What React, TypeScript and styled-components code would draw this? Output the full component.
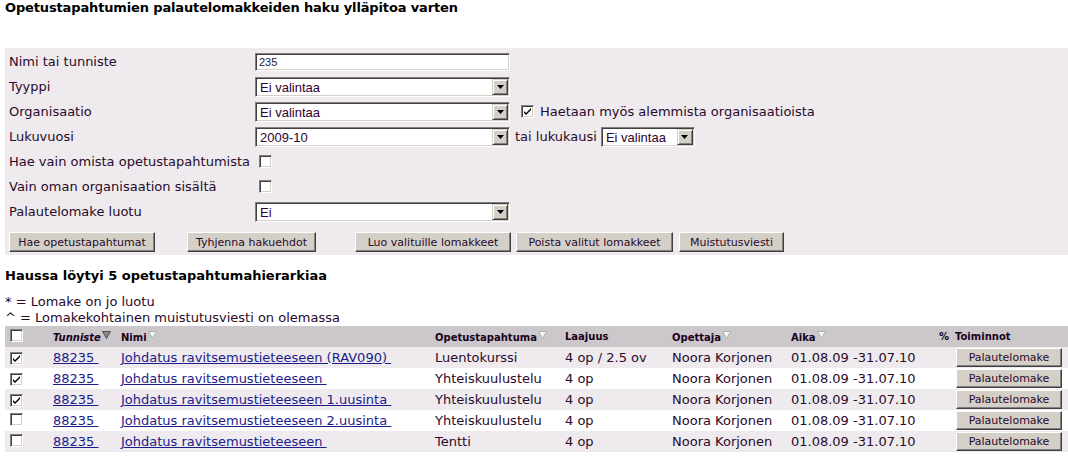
import * as React from "react"
import styled, { createGlobalStyle } from "styled-components"

const GlobalStyle = createGlobalStyle`
  body {
    margin: 0;
    background: #fff;
    font-family: "DejaVu Sans", Verdana, sans-serif;
    font-size: 13px;
    color: #2a0a2a;
  }
`

const Page = styled.div`
  padding-left: 5px;
`

const Title = styled.h1`
  margin: 0;
  font-size: 13px;
  font-weight: bold;
  line-height: 16px;
  letter-spacing: -0.14px;
  color: #000;
`

const Panel = styled.div`
  margin-top: 32px;
  background: #eeeaee;
  padding: 1px 0 3px 4px;
`

const FormRow = styled.div`
  display: flex;
  align-items: center;
  height: 25px;
`

const Label = styled.div`
  width: 246px;
  flex: none;
  line-height: 16px;
`

const TextInput = styled.div`
  box-sizing: border-box;
  width: 255px;
  height: 18px;
  background: #fff;
  border: 1px solid;
  border-color: #808080 #fff #fff #808080;
  box-shadow: inset 1px 1px 0 #404040, inset -1px -1px 0 #d4d0c8;
  font-family: "Liberation Sans", Arial, sans-serif;
  font-size: 11px;
  line-height: 16px;
  padding-left: 3px;
  color: #1a1a40;
`

const SelectBox = styled.div<{ $w: number; $ml?: number }>`
  box-sizing: border-box;
  width: ${(p) => p.$w}px;
  height: 20px;
  margin-left: ${(p) => p.$ml ?? 0}px;
  display: flex;
  background: #fff;
  border: 1px solid;
  border-color: #808080 #fff #fff #808080;
  box-shadow: inset 1px 1px 0 #404040, inset -1px -1px 0 #d4d0c8;
  padding: 2px;
`

const SelectValue = styled.span`
  flex: 1;
  padding-left: 2px;
  font-family: "Liberation Sans", Arial, sans-serif;
  font-size: 13px;
  line-height: 16px;
  color: #300030;
  white-space: nowrap;
  overflow: hidden;
`

const SelectArrow = styled.span`
  box-sizing: border-box;
  width: 16px;
  height: 16px;
  margin: -1px -1px 0 0;
  background: #d4d0c8;
  border: 1px solid;
  border-color: #d4d0c8 #404040 #404040 #d4d0c8;
  box-shadow: inset 1px 1px 0 #fff, inset -1px -1px 0 #808080;
  display: flex;
  align-items: center;
  justify-content: center;
`

const Check = styled.span<{ $ml?: number; $mr?: number }>`
  box-sizing: border-box;
  display: inline-flex;
  align-items: center;
  justify-content: center;
  flex: none;
  width: 13px;
  height: 13px;
  margin-left: ${(p) => p.$ml ?? 0}px;
  margin-right: ${(p) => p.$mr ?? 0}px;
  background: #fff;
  border: 1px solid;
  border-color: #808080 #fff #fff #808080;
  box-shadow: inset 1px 1px 0 #404040, inset -1px -1px 0 #d4d0c8;
`

const InlineText = styled.span<{ $ml?: number }>`
  margin-left: ${(p) => p.$ml ?? 0}px;
  line-height: 16px;
  white-space: nowrap;
`

const ButtonRow = styled.div`
  display: flex;
  margin-top: 8px;
  height: 20px;
`

const Button = styled.button<{ $w: number; $ml?: number }>`
  box-sizing: border-box;
  width: ${(p) => p.$w}px;
  height: 20px;
  margin: 0 0 0 ${(p) => p.$ml ?? 0}px;
  padding: 0;
  background: #d4d0c8;
  border: 1px solid;
  border-color: #fff #404040 #404040 #fff;
  box-shadow: inset -1px -1px 0 #808080;
  font-family: "DejaVu Sans", Verdana, sans-serif;
  font-size: 11px;
  color: #2a0a2a;
  white-space: nowrap;
`

const Heading = styled.h2`
  margin: 13px 0 0;
  font-size: 13px;
  font-weight: bold;
  line-height: 16px;
  color: #000;
`

const Legend = styled.div`
  margin-top: 10px;
  line-height: 16px;
`

const Table = styled.table`
  border-collapse: collapse;
  table-layout: fixed;
  width: 1063px;
`

const Th = styled.th<{ $italic?: boolean; $first?: boolean }>`
  height: 21px;
  padding: 0 0 0 ${(p) => (p.$first ? 5 : 3)}px;
  background: #cbc7cb;
  font-size: 10px;
  font-weight: bold;
  font-style: ${(p) => (p.$italic ? "italic" : "normal")};
  text-align: left;
  white-space: nowrap;
  overflow: hidden;
  color: #1a001a;
`

const Tr = styled.tr<{ $alt: boolean }>`
  background: ${(p) => (p.$alt ? "#fff" : "#eeeaee")};
`

const Td = styled.td<{ $first?: boolean }>`
  height: 21px;
  padding: 0 0 0 ${(p) => (p.$first ? 5 : 3)}px;
  white-space: nowrap;
  overflow: hidden;
  vertical-align: middle;
`

const CellLink = styled.a`
  color: #1c1c8a;
  text-decoration: underline;
  white-space: pre;
`

const RowButton = styled(Button)`
  height: 19px;
  vertical-align: middle;
`

const SortMark = styled.svg`
  margin-left: 1px;
  vertical-align: 2px;
`

function Arrow() {
  return (
    <svg width="7" height="4" viewBox="0 0 7 4">
      <path d="M0 0h7L3.5 4z" fill="#000" />
    </svg>
  )
}

function Select({ value, w, ml }: { value: string; w: number; ml?: number }) {
  return (
    <SelectBox $w={w} $ml={ml}>
      <SelectValue>{value}</SelectValue>
      <SelectArrow>
        <Arrow />
      </SelectArrow>
    </SelectBox>
  )
}

function Checkbox({ checked, ml, mr }: { checked?: boolean; ml?: number; mr?: number }) {
  return (
    <Check $ml={ml} $mr={mr}>
      {checked && (
        <svg width="7" height="7" viewBox="0 0 7 7">
          <path d="M0 3l2 2 5-5v2l-5 5-2-2z" fill="#000" />
        </svg>
      )}
    </Check>
  )
}

function Sort({ active }: { active?: boolean }) {
  return (
    <SortMark width="9" height="8" viewBox="0 0 9 8">
      <path
        d="M0.5 0.5h8L4.5 7.5z"
        fill={active ? "#8a8a8a" : "#f4f6f4"}
        stroke={active ? "#505050" : "#a8b4a8"}
        strokeWidth="1"
      />
    </SortMark>
  )
}

const rows = [
  { checked: true, name: "Johdatus ravitsemustieteeseen (RAV090) ", type: "Luentokurssi", scope: "4 op / 2.5 ov" },
  { checked: true, name: "Johdatus ravitsemustieteeseen ", type: "Yhteiskuulustelu", scope: "4 op" },
  { checked: true, name: "Johdatus ravitsemustieteeseen 1.uusinta ", type: "Yhteiskuulustelu", scope: "4 op" },
  { checked: false, name: "Johdatus ravitsemustieteeseen 2.uusinta ", type: "Yhteiskuulustelu", scope: "4 op" },
  { checked: false, name: "Johdatus ravitsemustieteeseen ", type: "Tentti", scope: "4 op" },
]

export default function App() {
  return (
    <Page>
      <GlobalStyle />
      <Title>Opetustapahtumien palautelomakkeiden haku ylläpitoa varten</Title>

      <Panel>
        <FormRow>
          <Label>Nimi tai tunniste</Label>
          <TextInput>235</TextInput>
        </FormRow>
        <FormRow>
          <Label>Tyyppi</Label>
          <Select value="Ei valintaa" w={255} />
        </FormRow>
        <FormRow>
          <Label>Organisaatio</Label>
          <Select value="Ei valintaa" w={255} />
          <Checkbox checked ml={11} mr={6} />
          <InlineText>Haetaan myös alemmista organisaatioista</InlineText>
        </FormRow>
        <FormRow>
          <Label>Lukuvuosi</Label>
          <Select value="2009-10" w={255} />
          <InlineText $ml={5}>tai lukukausi</InlineText>
          <Select value="Ei valintaa" w={94} ml={4} />
        </FormRow>
        <FormRow>
          <Label>Hae vain omista opetustapahtumista</Label>
          <Checkbox ml={4} />
        </FormRow>
        <FormRow>
          <Label>Vain oman organisaation sisältä</Label>
          <Checkbox ml={4} />
        </FormRow>
        <FormRow>
          <Label>Palautelomake luotu</Label>
          <Select value="Ei" w={255} />
        </FormRow>
        <ButtonRow>
          <Button $w={146}>Hae opetustapahtumat</Button>
          <Button $w={129} $ml={32}>Tyhjenna hakuehdot</Button>
          <Button $w={156} $ml={39}>Luo valituille lomakkeet</Button>
          <Button $w={157} $ml={5}>Poista valitut lomakkeet</Button>
          <Button $w={105} $ml={6}>Muistutusviesti</Button>
        </ButtonRow>
      </Panel>

      <Heading>Haussa löytyi 5 opetustapahtumahierarkiaa</Heading>
      <Legend>
        * = Lomake on jo luotu
        <br />^ = Lomakekohtainen muistutusviesti on olemassa
      </Legend>

      <Table>
        <colgroup>
          <col style={{ width: 45 }} />
          <col style={{ width: 68 }} />
          <col style={{ width: 314 }} />
          <col style={{ width: 130 }} />
          <col style={{ width: 107 }} />
          <col style={{ width: 119 }} />
          <col style={{ width: 148 }} />
          <col style={{ width: 16 }} />
          <col style={{ width: 116 }} />
        </colgroup>
        <thead>
          <tr>
            <Th $first>
              <Checkbox />
            </Th>
            <Th $italic>
              Tunniste
              <Sort active />
            </Th>
            <Th>
              Nimi
              <Sort />
            </Th>
            <Th>
              Opetustapahtuma
              <Sort />
            </Th>
            <Th>Laajuus</Th>
            <Th>
              Opettaja
              <Sort />
            </Th>
            <Th>
              Aika
              <Sort />
            </Th>
            <Th>%</Th>
            <Th>Toiminnot</Th>
          </tr>
        </thead>
        <tbody>
          {rows.map((r, i) => (
            <Tr key={i} $alt={i % 2 === 1}>
              <Td $first>
                <Checkbox checked={r.checked} />
              </Td>
              <Td>
                <CellLink href="#">88235 </CellLink>
              </Td>
              <Td>
                <CellLink href="#">{r.name}</CellLink>
              </Td>
              <Td>{r.type}</Td>
              <Td>{r.scope}</Td>
              <Td>Noora Korjonen</Td>
              <Td>01.08.09 -31.07.10</Td>
              <Td />
              <Td>
                <RowButton $w={106} $ml={1}>Palautelomake</RowButton>
              </Td>
            </Tr>
          ))}
        </tbody>
      </Table>
    </Page>
  )
}
